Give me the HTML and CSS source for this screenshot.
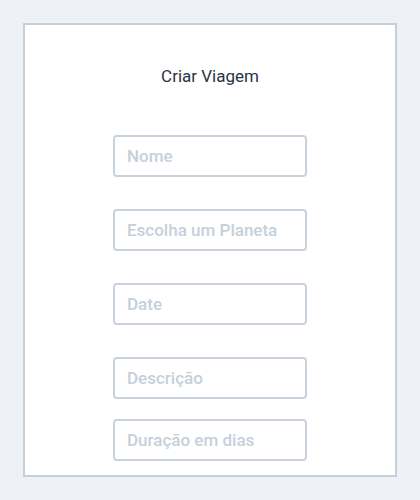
FILE: index.html
```html
<!DOCTYPE html>
<html lang="pt">
<head>
<meta charset="utf-8">
<link rel="stylesheet" href="styles.css">
</head>
<body>
<form class="card">
  <h1 class="title">Criar Viagem</h1>
  <div class="fields">
    <input class="field" type="text" placeholder="Nome">
    <input class="field" type="text" placeholder="Escolha um Planeta">
    <input class="field" type="text" placeholder="Date">
    <input class="field" type="text" placeholder="Descrição">
    <input class="field field--tight" type="text" placeholder="Duração em dias">
  </div>
</form>
</body>
</html>
```
FILE: styles.css
```css
html, body {
  margin: 0;
  padding: 0;
  background: #eef2f6;
}
body {
  padding: 23px 23px 0 23px;
  font-family: Roboto, "Noto Sans", sans-serif;
}
.card {
  box-sizing: border-box;
  width: 374px;
  height: 454px;
  background: #ffffff;
  border: 2px solid #c5d0db;
  padding: 39px 0 13px 0;
  display: flex;
  flex-direction: column;
  align-items: center;
}
.title {
  margin: 0;
  font-size: 17px;
  line-height: 24px;
  font-weight: 400;
  color: #2a3444;
}
.fields {
  margin-top: 47px;
  display: flex;
  flex-direction: column;
  align-items: center;
}
.field {
  box-sizing: border-box;
  width: 194px;
  height: 42px;
  margin: 0 0 32px 0;
  padding: 0 12px;
  border: 2px solid #c8d2dc;
  border-radius: 4px;
  background: #fff;
  font-family: Roboto, "Noto Sans", sans-serif;
  font-size: 17px;
  font-weight: 500;
  color: #2a3444;
  outline: none;
}
.field:nth-child(4) {
  margin-bottom: 20px;
}
.field--tight {
  margin-bottom: 0;
}
.field::placeholder {
  color: #c5d0db;
  opacity: 1;
}
```
